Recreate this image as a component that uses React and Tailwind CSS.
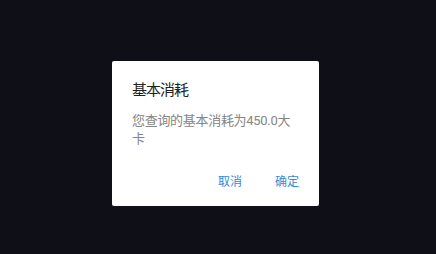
import React from 'react';

export default function App() {
  return (
    <div
      className="w-[436px] h-[254px] bg-[#0f0f18] pt-[61px] pl-[112px]"
      style={{ fontFamily: 'Roboto, "Noto Sans CJK SC", sans-serif' }}
    >
      <div className="w-[207px] h-[145px] bg-white rounded-[2px] flex flex-col">
        <div className="pt-[19px] px-[20px] text-[15px] leading-[20px] tracking-[-1px] text-[#212121]">基本消耗</div>
        <div className="mt-[12px] px-[20px] text-[13px] leading-[18px] tracking-[-0.3px] text-[#858585]">
          您查询的基本消耗为450.0大卡
        </div>
        <div className="mt-auto pb-[12px] pr-[12px] flex justify-end gap-[17px]">
          <button className="px-[8px] h-[24px] text-[12px] text-[#2f8bd8]">取消</button>
          <button className="px-[8px] h-[24px] text-[12px] text-[#2f8bd8]">确定</button>
        </div>
      </div>
    </div>
  );
}
